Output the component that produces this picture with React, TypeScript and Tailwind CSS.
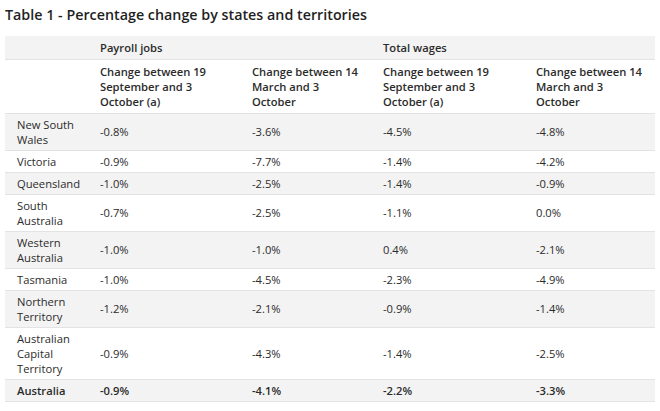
import React from "react";

const rows: { name: string; v: string[]; bold?: boolean }[] = [
  { name: "New South Wales", v: ["-0.8%", "-3.6%", "-4.5%", "-4.8%"] },
  { name: "Victoria", v: ["-0.9%", "-7.7%", "-1.4%", "-4.2%"] },
  { name: "Queensland", v: ["-1.0%", "-2.5%", "-1.4%", "-0.9%"] },
  { name: "South Australia", v: ["-0.7%", "-2.5%", "-1.1%", "0.0%"] },
  { name: "Western Australia", v: ["-1.0%", "-1.0%", "0.4%", "-2.1%"] },
  { name: "Tasmania", v: ["-1.0%", "-4.5%", "-2.3%", "-4.9%"] },
  { name: "Northern Territory", v: ["-1.2%", "-2.1%", "-0.9%", "-1.4%"] },
  { name: "Australian Capital Territory", v: ["-0.9%", "-4.3%", "-1.4%", "-2.5%"] },
  { name: "Australia", v: ["-0.9%", "-4.1%", "-2.2%", "-3.3%"], bold: true },
];

const headA = (
  <>
    Change between 19
    <br />
    September and 3
    <br />
    October (a)
  </>
);
const headB = (
  <>
    Change between 14
    <br />
    March and 3
    <br />
    October
  </>
);

export default function App() {
  return (
    <div
      className="w-[660px] h-[411px] bg-white text-[#2b2b2b] overflow-hidden"
      style={{ fontFamily: '"Open Sans", "Noto Sans", sans-serif' }}
    >
      <h1 className="pl-[5px] pt-[4px] text-[14.3px] leading-[22px] font-semibold text-[#1f1f1f]">
        Table 1 - Percentage change by states and territories
      </h1>
      <table className="ml-[5px] mt-[10px] w-[650px] table-fixed border-collapse text-[11.2px] leading-[15px]">
        <colgroup>
          <col className="w-[83px]" />
          <col className="w-[152px]" />
          <col className="w-[131px]" />
          <col className="w-[153px]" />
          <col className="w-[131px]" />
        </colgroup>
        <thead>
          <tr className="bg-[#f3f3f3] border-b border-[#e3e3e3]">
            <th className="h-[23px] px-[12px] py-[3px]" />
            <th colSpan={2} className="px-[12px] py-[3px] text-left font-semibold">
              Payroll jobs
            </th>
            <th colSpan={2} className="px-[12px] py-[3px] text-left font-semibold">
              Total wages
            </th>
          </tr>
          <tr className="bg-white border-b border-[#e3e3e3]">
            <th className="px-[12px] py-[4px]" />
            <th className="pl-[12px] pr-[2px] py-[4px] text-left font-semibold align-top whitespace-nowrap">
              {headA}
            </th>
            <th className="pl-[12px] pr-[2px] py-[4px] text-left font-semibold align-top whitespace-nowrap">
              {headB}
            </th>
            <th className="pl-[12px] pr-[2px] py-[4px] text-left font-semibold align-top whitespace-nowrap">
              {headA}
            </th>
            <th className="pl-[12px] pr-[2px] py-[4px] text-left font-semibold align-top whitespace-nowrap">
              {headB}
            </th>
          </tr>
        </thead>
        <tbody>
          {rows.map((r, i) => (
            <tr
              key={r.name}
              className={`${i % 2 === 0 ? "bg-[#f3f3f3]" : "bg-white"} border-b border-[#e3e3e3] ${
                r.bold ? "font-semibold" : ""
              }`}
            >
              <td className="pl-[12px] pr-[4px] py-[3px] align-middle">{r.name}</td>
              {r.v.map((x, j) => (
                <td key={j} className="px-[12px] py-[3px] align-middle">
                  {x}
                </td>
              ))}
            </tr>
          ))}
        </tbody>
      </table>
    </div>
  );
}
